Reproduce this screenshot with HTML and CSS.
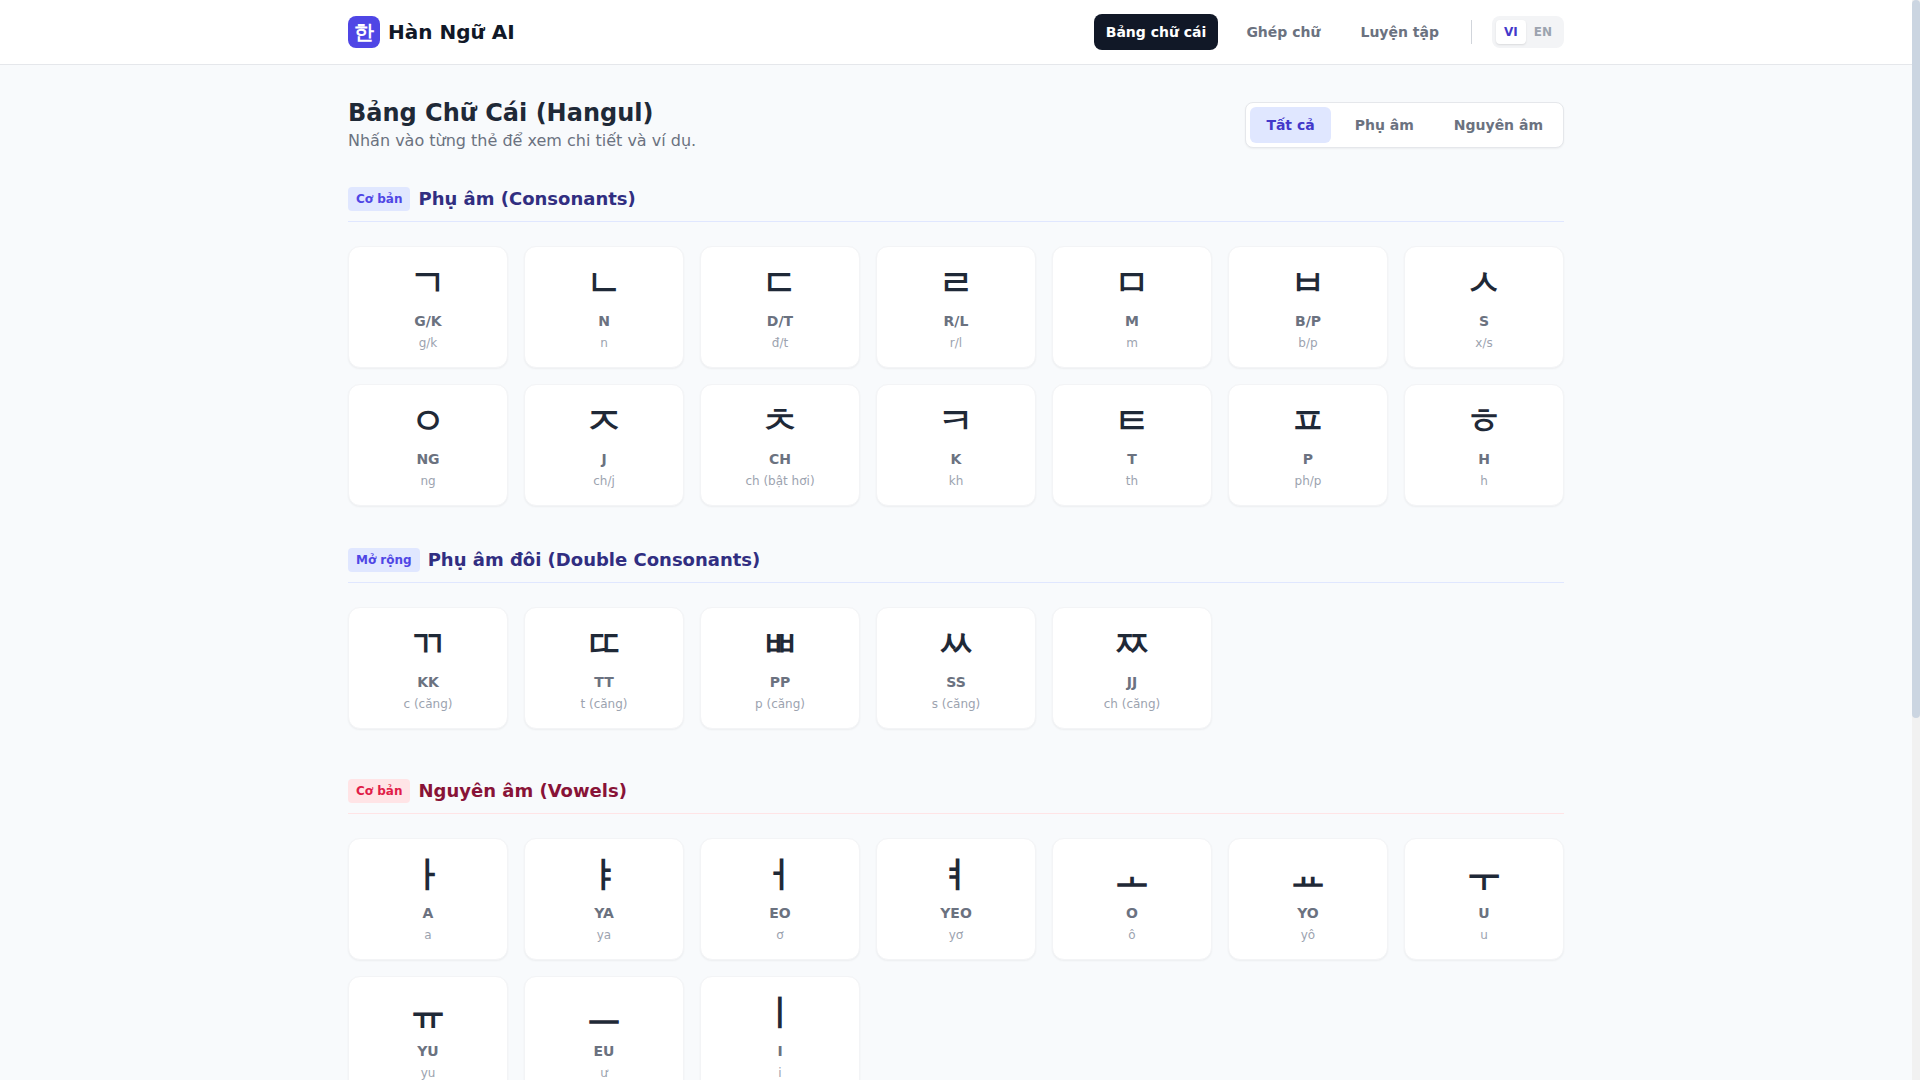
FILE: index.html
```html
<!DOCTYPE html>
<html lang="vi">
    <head>
        <meta charset="utf-8">
        <meta name="viewport" content="width=device-width, initial-scale=1.0">
        <title>Hàn Ngữ AI</title>
        <link rel="stylesheet" href="styles.css">
    </head>
    <body>
        <header class="topbar">
            <div class="topbar-inner">
                <a class="brand" href="#"><span class="logo">한</span>Hàn Ngữ AI</a>
                <nav class="nav">
                    <button type="button" class="nav-btn active">Bảng chữ cái</button>
                    <button type="button" class="nav-btn">Ghép chữ</button>
                    <button type="button" class="nav-btn">Luyện tập</button>
                    <span class="divider"></span>
                    <div class="lang">
                        <button type="button" class="active">VI</button>
                        <button type="button">EN</button>
                    </div>
                </nav>
            </div>
        </header>

        <main>
            <div class="intro">
                <div>
                    <h1>Bảng Chữ Cái (Hangul)</h1>
                    <p>Nhấn vào từng thẻ để xem chi tiết và ví dụ.</p>
                </div>
                <div class="filter">
                    <button type="button" class="active">Tất cả</button>
                    <button type="button">Phụ âm</button>
                    <button type="button">Nguyên âm</button>
                </div>
            </div>

            <div class="group">
                <section>
                    <h2><span class="badge">Cơ bản</span>Phụ âm (Consonants)</h2>
                    <div class="grid">
                        <button type="button" class="card"><span class="char">ㄱ</span><span class="roman">G/K</span><span class="sound">g/k</span></button>
                        <button type="button" class="card"><span class="char">ㄴ</span><span class="roman">N</span><span class="sound">n</span></button>
                        <button type="button" class="card"><span class="char">ㄷ</span><span class="roman">D/T</span><span class="sound">đ/t</span></button>
                        <button type="button" class="card"><span class="char">ㄹ</span><span class="roman">R/L</span><span class="sound">r/l</span></button>
                        <button type="button" class="card"><span class="char">ㅁ</span><span class="roman">M</span><span class="sound">m</span></button>
                        <button type="button" class="card"><span class="char">ㅂ</span><span class="roman">B/P</span><span class="sound">b/p</span></button>
                        <button type="button" class="card"><span class="char">ㅅ</span><span class="roman">S</span><span class="sound">x/s</span></button>
                        <button type="button" class="card"><span class="char">ㅇ</span><span class="roman">NG</span><span class="sound">ng</span></button>
                        <button type="button" class="card"><span class="char">ㅈ</span><span class="roman">J</span><span class="sound">ch/j</span></button>
                        <button type="button" class="card"><span class="char">ㅊ</span><span class="roman">CH</span><span class="sound">ch (bật hơi)</span></button>
                        <button type="button" class="card"><span class="char">ㅋ</span><span class="roman">K</span><span class="sound">kh</span></button>
                        <button type="button" class="card"><span class="char">ㅌ</span><span class="roman">T</span><span class="sound">th</span></button>
                        <button type="button" class="card"><span class="char">ㅍ</span><span class="roman">P</span><span class="sound">ph/p</span></button>
                        <button type="button" class="card"><span class="char">ㅎ</span><span class="roman">H</span><span class="sound">h</span></button>
                    </div>
                </section>
                <section>
                    <h2><span class="badge">Mở rộng</span>Phụ âm đôi (Double Consonants)</h2>
                    <div class="grid">
                        <button type="button" class="card"><span class="char">ㄲ</span><span class="roman">KK</span><span class="sound">c (căng)</span></button>
                        <button type="button" class="card"><span class="char">ㄸ</span><span class="roman">TT</span><span class="sound">t (căng)</span></button>
                        <button type="button" class="card"><span class="char">ㅃ</span><span class="roman">PP</span><span class="sound">p (căng)</span></button>
                        <button type="button" class="card"><span class="char">ㅆ</span><span class="roman">SS</span><span class="sound">s (căng)</span></button>
                        <button type="button" class="card"><span class="char">ㅉ</span><span class="roman">JJ</span><span class="sound">ch (căng)</span></button>
                    </div>
                </section>
            </div>

            <div class="group vowels">
                <section>
                    <h2><span class="badge">Cơ bản</span>Nguyên âm (Vowels)</h2>
                    <div class="grid">
                        <button type="button" class="card"><span class="char">ㅏ</span><span class="roman">A</span><span class="sound">a</span></button>
                        <button type="button" class="card"><span class="char">ㅑ</span><span class="roman">YA</span><span class="sound">ya</span></button>
                        <button type="button" class="card"><span class="char">ㅓ</span><span class="roman">EO</span><span class="sound">ơ</span></button>
                        <button type="button" class="card"><span class="char">ㅕ</span><span class="roman">YEO</span><span class="sound">yơ</span></button>
                        <button type="button" class="card"><span class="char">ㅗ</span><span class="roman">O</span><span class="sound">ô</span></button>
                        <button type="button" class="card"><span class="char">ㅛ</span><span class="roman">YO</span><span class="sound">yô</span></button>
                        <button type="button" class="card"><span class="char">ㅜ</span><span class="roman">U</span><span class="sound">u</span></button>
                        <button type="button" class="card"><span class="char">ㅠ</span><span class="roman">YU</span><span class="sound">yu</span></button>
                        <button type="button" class="card"><span class="char">ㅡ</span><span class="roman">EU</span><span class="sound">ư</span></button>
                        <button type="button" class="card"><span class="char">ㅣ</span><span class="roman">I</span><span class="sound">i</span></button>
                    </div>
                </section>
            </div>
        </main>

        <div class="scrollbar"><div class="thumb"></div></div>
    </body>
</html>
```
FILE: styles.css
```css
* {
    box-sizing: border-box;
}

body {
    margin: 0;
    padding-right: 8px;
    background-color: #f8fafc;
    color: #1f2937;
    font-family: "DejaVu Sans", sans-serif;
    font-size: 16px;
    line-height: 24px;
}

html {
    scrollbar-width: none;
}
.scrollbar {
    position: fixed;
    top: 0;
    right: 0;
    bottom: 0;
    z-index: 20;
    width: 8px;
    background-color: #f1f1f1;
}
.thumb {
    height: 66.5%;
    border-radius: 4px;
    background-color: #cbd5e1;
}

h1, h2, p {
    margin: 0;
}

button {
    border: 0;
    padding: 0;
    background: none;
    color: inherit;
    font: inherit;
    cursor: pointer;
}

/* header */
.topbar {
    position: sticky;
    top: 0;
    z-index: 10;
    background-color: white;
    border-bottom: 1px solid #e5e7eb;
}

.topbar-inner {
    display: flex;
    align-items: center;
    justify-content: space-between;
    max-width: 1280px;
    height: 64px;
    margin: 0 auto;
    padding: 0 32px;
}

.brand {
    display: flex;
    align-items: center;
    gap: 8px;
    color: #111827;
    font-size: 20px;
    font-weight: bold;
    text-decoration: none;
}

.logo {
    display: flex;
    align-items: center;
    justify-content: center;
    width: 32px;
    height: 32px;
    border-radius: 8px;
    background-color: #4f46e5;
    color: white;
}

.nav {
    display: flex;
    align-items: center;
    gap: 16px;
}

.nav-btn {
    padding: 8px 12px;
    border-radius: 8px;
    color: #6b7280;
    font-size: 14px;
    font-weight: bold;
    line-height: 20px;
}
.nav-btn.active {
    background-color: #111827;
    color: white;
}

.divider {
    width: 1px;
    height: 24px;
    margin: 0 4px;
    background-color: #d1d5db;
}

.lang {
    display: flex;
    padding: 4px;
    border-radius: 8px;
    background-color: #f3f4f6;
}
.lang button {
    padding: 4px 8px;
    border-radius: 4px;
    color: #9ca3af;
    font-size: 12px;
    font-weight: bold;
    line-height: 16px;
}
.lang .active {
    background-color: white;
    color: #4338ca;
    box-shadow: 0 1px 2px rgba(0, 0, 0, 0.1);
}

/* content */
main {
    max-width: 1280px;
    margin: 0 auto;
    padding: 32px;
}

.intro {
    display: flex;
    align-items: center;
    justify-content: space-between;
    margin-bottom: 32px;
}
.intro h1 {
    font-size: 24px;
    line-height: 32px;
}
.intro p {
    color: #6b7280;
}

.filter {
    display: flex;
    gap: 8px;
    padding: 4px;
    border: 1px solid #e5e7eb;
    border-radius: 8px;
    background-color: white;
    box-shadow: 0 1px 2px rgba(0, 0, 0, 0.05);
}
.filter button {
    padding: 8px 16px;
    border-radius: 6px;
    color: #6b7280;
    font-size: 14px;
    font-weight: bold;
    line-height: 20px;
}
.filter .active {
    background-color: #e0e7ff;
    color: #4338ca;
}

.group {
    display: flex;
    flex-direction: column;
    gap: 40px;
    margin-bottom: 48px;
}

h2 {
    display: flex;
    align-items: center;
    gap: 8px;
    margin-bottom: 24px;
    padding-bottom: 8px;
    border-bottom: 1px solid #e0e7ff;
    color: #312e81;
    font-size: 18px;
    line-height: 28px;
}

.badge {
    padding: 4px 8px;
    border-radius: 4px;
    background-color: #e0e7ff;
    color: #4f46e5;
    font-size: 12px;
    line-height: 16px;
}

.vowels h2 {
    border-color: #ffe4e6;
    color: #881337;
}
.vowels .badge {
    background-color: #ffe4e6;
    color: #e11d48;
}

.grid {
    display: grid;
    grid-template-columns: repeat(7, 1fr);
    gap: 16px;
}

.card {
    display: flex;
    flex-direction: column;
    align-items: center;
    padding: 16px;
    border: 1px solid #f3f4f6;
    border-radius: 12px;
    background-color: white;
    box-shadow: 0 1px 2px rgba(0, 0, 0, 0.05);
}

.char {
    margin-bottom: 8px;
    color: #1f2937;
    font-size: 36px;
    font-weight: bold;
    line-height: 40px;
}

.roman {
    color: #6b7280;
    font-size: 14px;
    font-weight: bold;
    line-height: 20px;
}

.sound {
    margin-top: 4px;
    color: #9ca3af;
    font-size: 12px;
    line-height: 16px;
}
```
